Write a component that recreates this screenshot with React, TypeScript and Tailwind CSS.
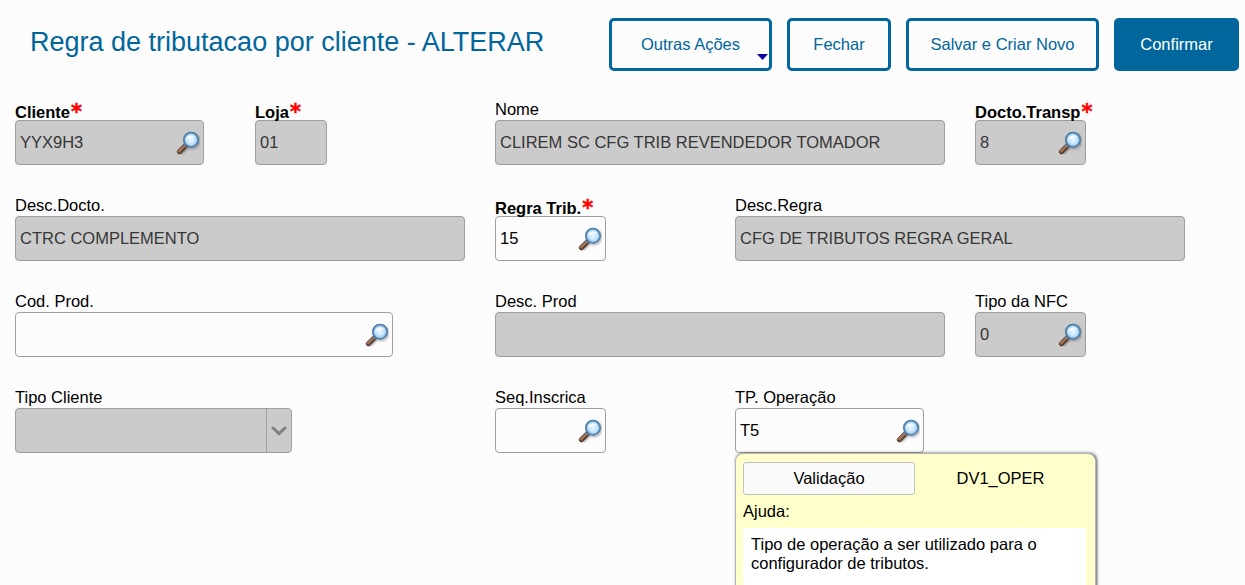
import React from 'react';
import clsx from 'clsx';

interface Field {
  label: string;
  value?: string;
  span: string;
  width: string;
  required?: boolean;
  disabled?: boolean;
  lookup?: boolean;
  select?: boolean;
  help?: boolean;
}

const FIELDS: Field[] = [
  { label: 'Cliente', value: 'YYX9H3', span: 'col-span-1', width: 'w-[189px]', required: true, disabled: true, lookup: true },
  { label: 'Loja', value: '01', span: 'col-span-1', width: 'w-[72px]', required: true, disabled: true },
  { label: 'Nome', value: 'CLIREM SC CFG TRIB REVENDEDOR TOMADOR', span: 'col-span-2', width: 'w-[450px]', disabled: true },
  { label: 'Docto.Transp', value: '8', span: 'col-span-1', width: 'w-[111px]', required: true, disabled: true, lookup: true },
  { label: 'Desc.Docto.', value: 'CTRC COMPLEMENTO', span: 'col-span-2', width: 'w-[450px]', disabled: true },
  { label: 'Regra Trib.', value: '15', span: 'col-span-1', width: 'w-[111px]', required: true, lookup: true },
  { label: 'Desc.Regra', value: 'CFG DE TRIBUTOS REGRA GERAL', span: 'col-span-2', width: 'w-[450px]', disabled: true },
  { label: 'Cod. Prod.', span: 'col-span-2', width: 'w-[378px]', lookup: true },
  { label: 'Desc. Prod', span: 'col-span-2', width: 'w-[450px]', disabled: true },
  { label: 'Tipo da NFC', value: '0', span: 'col-span-1', width: 'w-[111px]', disabled: true, lookup: true },
  { label: 'Tipo Cliente', span: 'col-span-2', width: 'w-[277px]', disabled: true, select: true },
  { label: 'Seq.Inscrica', span: 'col-span-1', width: 'w-[111px]', lookup: true },
  { label: 'TP. Operação', value: 'T5', span: 'col-span-2', width: 'w-[189px]', lookup: true, help: true },
];

function LookupIcon() {
  return (
    <svg className="h-6 w-6 shrink-0" viewBox="0 0 24 24" fill="none">
      <defs>
        <radialGradient id="lens" cx="0.5" cy="0.5" r="0.55">
          <stop offset="0" stopColor="#eef9ff" />
          <stop offset="0.55" stopColor="#c0e2f8" />
          <stop offset="1" stopColor="#6aa9da" />
        </radialGradient>
        <filter id="soft" x="-30%" y="-30%" width="160%" height="160%">
          <feGaussianBlur stdDeviation="0.9" />
        </filter>
      </defs>
      <g filter="url(#soft)" opacity="0.35">
        <path d="M4.5 22 11 15.5" stroke="#000" strokeWidth="4" />
        <circle cx="16" cy="10" r="7" stroke="#000" strokeWidth="2" />
      </g>
      <path d="M3.4 20.7 9.4 14.7" stroke="#5a3d35" strokeWidth="5" strokeLinecap="round" />
      <path d="M3 20.3 8.8 14.5" stroke="#a47558" strokeWidth="2.4" strokeLinecap="round" />
      <path d="M8.2 15.6 10.8 13" stroke="#777b86" strokeWidth="3.4" />
      <circle cx="15" cy="8.7" r="7.2" fill="url(#lens)" stroke="#4e7ba8" strokeWidth="1.5" />
      <path d="M9.9 9a5.3 5.3 0 0 1 9.7-2.4c-2.8-.5-6.1.4-9.7 2.4Z" fill="#fff" opacity="0.75" />
    </svg>
  );
}

function ActionButton({ children, className }: { children: React.ReactNode; className: string }) {
  return (
    <button
      className={clsx(
        'h-[53px] shrink-0 rounded-[5px] border-3 border-[#00669b] text-[16.5px] leading-none flex items-center justify-center',
        className
      )}
    >
      {children}
    </button>
  );
}

function HelpPopup() {
  return (
    <div className="absolute left-0 top-[69px] z-10 h-[160px] w-[361px] rounded-lg border border-[#b5b5b5] bg-[#ffffcb] px-[7px] pt-2 shadow-[1px_0px_3px_#555]">
      <div className="flex items-center">
        <button className="h-[33px] w-[172px] rounded-[3px] border border-[#c0c0c0] bg-[#fafafa] text-[16.5px]">
          Validação
        </button>
        <span className="flex-1 pr-[2px] text-center">DV1_OPER</span>
      </div>
      <div className="mt-[7px] h-[26px] leading-[19px]">Ajuda:</div>
      <p className="h-[120px] w-[343px] bg-white px-2 pt-[7px] leading-[19px]">
        Tipo de operação a ser utilizado para o configurador de tributos.
      </p>
    </div>
  );
}

function FormField({ field }: { field: Field }) {
  return (
    <div className={clsx('relative h-24', field.span)}>
      <div
        className={clsx(
          'flex h-6 items-end whitespace-nowrap text-black',
          field.required ? 'font-bold leading-[16px]' : 'pb-0.5 leading-[18px]'
        )}
      >
        {field.label}
        {field.required && (
          <span className="h-[24px] pl-px font-['DejaVu_Sans'] text-[21px] leading-[32px] text-[#ff0000] [-webkit-text-stroke:0.5px_#ff0000]">
            *
          </span>
        )}
      </div>
      <div
        className={clsx(
          'flex h-[45px] items-center overflow-hidden rounded-[4px] border border-[#9e9e9e] pl-[4px]',
          field.width,
          field.disabled ? 'bg-[#cbcbcb] text-[#363636]' : 'bg-[#fcfcfc] text-black'
        )}
      >
        <span className="flex-1 whitespace-nowrap pb-0.5 leading-[18px]">{field.value}</span>
        {field.lookup && (
          <span className="mr-[3px] mt-px">
            <LookupIcon />
          </span>
        )}
        {field.select && (
          <span className="flex h-full w-[25px] items-center justify-center border-l border-[#9e9e9e]">
            <svg className="h-[10px] w-4" viewBox="0 0 16 10" fill="none">
              <path d="M2 2 8 7.6 14 2" stroke="#808080" strokeWidth="3" strokeLinecap="round" />
            </svg>
          </span>
        )}
      </div>
      {field.help && <HelpPopup />}
    </div>
  );
}

function App() {
  return (
    <div className="h-[585px] w-[1245px] overflow-hidden bg-[#fcfcfc] font-['Liberation_Sans',Arial,sans-serif] text-[16.5px] text-black">
      {/* Title and actions */}
      <header className="flex h-24 items-start justify-between pl-[30px] pr-[6px] pt-[18px]">
        <h1 className="whitespace-nowrap text-[27px] leading-[48px] text-[#00669b]">
          Regra de tributacao por cliente - ALTERAR
        </h1>
        <div className="flex gap-[15px] text-[#00669b]">
          <ActionButton className="relative w-[163px]">
            Outras Ações
            <svg className="absolute bottom-2 right-px h-[6px] w-[11px]" viewBox="0 0 11 6">
              <path d="M0 0h11L5.5 6Z" fill="#0a00a8" />
            </svg>
          </ActionButton>
          <ActionButton className="w-[104px]">Fechar</ActionButton>
          <ActionButton className="w-[193px]">Salvar e Criar Novo</ActionButton>
          <ActionButton className="w-[125px] bg-[#00669b] text-white">Confirmar</ActionButton>
        </div>
      </header>

      {/* Form */}
      <main className="grid grid-cols-[repeat(5,240px)] pl-[15px]">
        {FIELDS.map((field) => (
          <FormField key={field.label} field={field} />
        ))}
      </main>
    </div>
  );
}

export default App;
